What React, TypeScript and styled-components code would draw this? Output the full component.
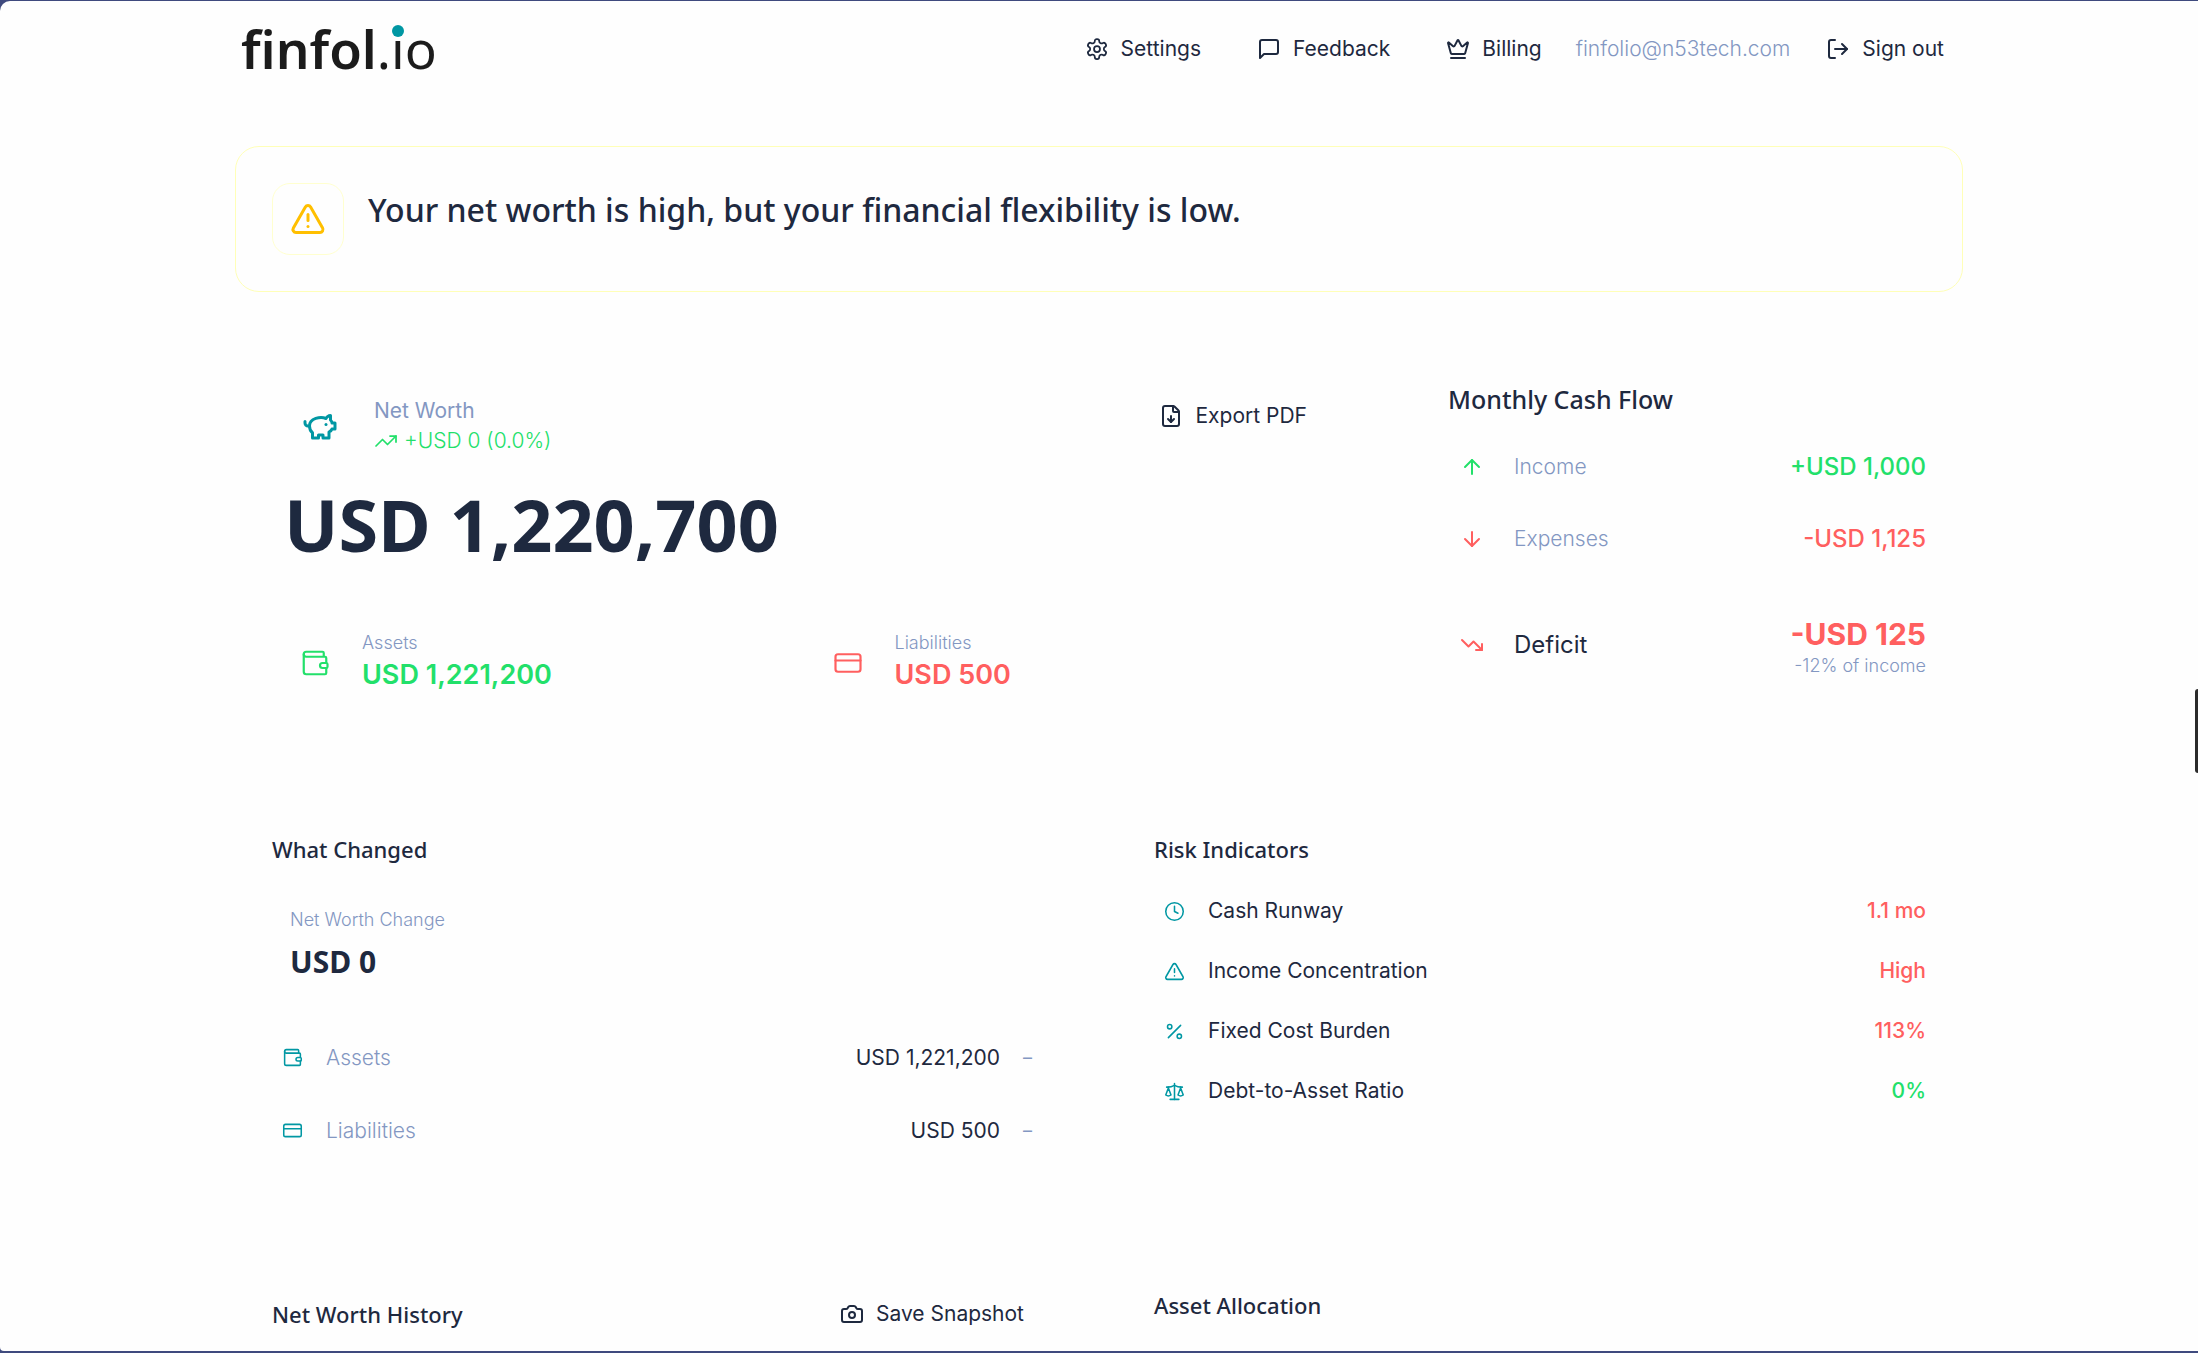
import React from "react";
import styled, { createGlobalStyle } from "styled-components";
import {
  Crown, LogOut, TriangleAlert, TrendingUp, TrendingDown,
  FileDown, Wallet, CreditCard, ArrowUp, ArrowDown, Clock, Percent, Scale, Camera,
} from "lucide-react";

const color = {
  ink: "#1e293f",
  muted: "#8397c2",
  teal: "#0097a3",
  green: "#22e06a",
  red: "#ff5f5f",
  amber: "#ffbf00",
  page: "#fefefe",
  frame: "#3f4a7e",
};

const display = `"Noto Sans", "Open Sans", sans-serif`;

const GlobalStyle = createGlobalStyle`
  * { box-sizing: border-box; }
  body { margin: 0; background: ${color.frame}; color: ${color.ink};
    font-family: Inter, "Liberation Sans", sans-serif; font-size: 21px; line-height: 30px; }
  h1, h2, p { margin: 0; padding: 0; font-weight: inherit; }
  svg { display: block; flex: none; }
`;

const Frame = styled.div`
  height: 100vh;
  padding: 1px 0 2px;
  overflow: hidden;
`;
const Page = styled.div`
  height: 100%;
  overflow: hidden;
  background: ${color.page};
  border-radius: 10px 0 0 4px;
`;
const Container = styled.div`
  max-width: 1728px;
  margin: 0 auto;
`;
const Header = styled.header`
  display: flex;
  align-items: center;
  justify-content: space-between;
  height: 96px;
  padding: 0 19px 0 6px;
`;
const Logo = styled.a`
  color: #1b1b1b;
  font: 600 53px/72px ${display};
  text-decoration: none;
  span { font-weight: 400; }
`;
const LogoI = styled.span`
  position: relative;
  &::after {
    content: "";
    position: absolute;
    left: 50%;
    top: 13px;
    width: 12px;
    height: 12px;
    margin-left: -6px;
    border-radius: 50%;
    background: ${color.teal};
  }
`;
const Nav = styled.nav`
  display: flex;
  align-items: center;
  gap: 56px;
`;
const Account = styled.div`
  display: flex;
  align-items: center;
  gap: 36px;
  margin-left: -22px;
`;
const Email = styled.span`
  color: ${color.muted};
  font-weight: 300;
`;
const Action = styled.button<{ $height?: number; $pad?: number }>`
  display: flex;
  align-items: center;
  gap: 12px;
  height: ${(p) => p.$height ?? 30}px;
  padding: 0 ${(p) => p.$pad ?? 0}px;
  border: 0;
  background: none;
  color: inherit;
  font: inherit;
  cursor: pointer;
`;
const Banner = styled.section`
  display: flex;
  gap: 24px;
  margin-top: 49px;
  padding: 36px;
  border: 1px solid #ffffb8;
  border-radius: 24px;
`;
const BannerIcon = styled.div`
  display: grid;
  place-items: center;
  width: 72px;
  height: 72px;
  border: 1px solid #ffffcf;
  border-radius: 18px;
  color: ${color.amber};
`;
const BannerTitle = styled.h1`
  font: 500 32px/54px ${display};
`;
const Overview = styled.div`
  display: grid;
  grid-template-columns: 2fr 1fr;
  gap: 72px;
  margin-top: 84px;
`;
const NetWorth = styled.section`
  padding: 16px 32px 0 37px;
`;
const Row = styled.div<{ $align?: string }>`
  display: flex;
  align-items: ${(p) => p.$align ?? "flex-start"};
  justify-content: space-between;
`;
const Summary = styled.div`
  display: flex;
  align-items: center;
  gap: 20px;
  padding-left: 14px;
`;
const Tile = styled.div<{ $size: number; $tone: string }>`
  display: grid;
  place-items: center;
  width: ${(p) => p.$size}px;
  height: ${(p) => p.$size}px;
  color: ${(p) => p.$tone};
`;
const Muted = styled.p<{ $small?: boolean; $light?: boolean }>`
  color: ${color.muted};
  font-size: ${(p) => (p.$small ? 18 : 21)}px;
  font-weight: ${(p) => (p.$light ? 300 : 400)};
`;
const Trend = styled.p`
  display: flex;
  align-items: center;
  gap: 6px;
  color: ${color.green};
  font-weight: 300;
`;
const Total = styled.p`
  margin-top: 16px;
  padding-left: 12px;
  font: 700 72px/96px ${display};
`;
const Split = styled.div`
  display: grid;
  grid-template-columns: 1fr 1fr;
  gap: 30px;
  margin-top: 56px;
`;
const SplitItem = styled.div`
  display: flex;
  align-items: flex-end;
  gap: 18px;
  padding-left: 14px;
`;
const Amount = styled.p<{ $tone: string; $size?: number; $weight?: number }>`
  color: ${(p) => p.$tone};
  font-size: ${(p) => p.$size ?? 21}px;
  font-weight: ${(p) => p.$weight ?? 500};
  line-height: ${(p) => ((p.$size ?? 21) > 24 ? 34 : 30)}px;
`;
const CashFlow = styled.section`
  padding: 5px 37px 0;
`;
const Title = styled.h2<{ $large?: boolean }>`
  font: 500 ${(p) => (p.$large ? 25 : 22)}px/36px ${display};
`;
const FlowRow = styled.div<{ $gap: number }>`
  display: flex;
  align-items: center;
  gap: 18px;
  min-height: 48px;
  margin-top: ${(p) => p.$gap}px;
`;
const Grow = styled.div`
  flex: 1;
`;
const Strong = styled.p`
  font-size: 24px;
  font-weight: 400;
`;
const End = styled.div`
  padding-top: 8px;
  text-align: right;
`;
const Columns = styled.div`
  display: grid;
  grid-template-columns: 1fr 1fr;
  gap: 36px;
`;
const Panel = styled.section<{ $top: number }>`
  padding: ${(p) => p.$top}px 37px 0;
`;
const Change = styled.div`
  padding: 38px 18px;
`;
const ChangeTotal = styled.p`
  margin-top: 6px;
  font: 700 30px/42px ${display};
`;
const Item = styled.div<{ $height: number; $pad: number }>`
  display: flex;
  align-items: center;
  gap: 23px;
  height: ${(p) => p.$height}px;
  padding: 0 ${(p) => p.$pad}px 0 10px;
`;
const RiskList = styled.div`
  padding-top: 14px;
`;
const Handle = styled.button`
  position: fixed;
  right: 0;
  top: 689px;
  width: 3px;
  height: 84px;
  padding: 0;
  border: 0;
  border-radius: 3px 0 0 3px;
  background: #2b2b2b;
`;

type GlyphProps = { size: number; stroke?: number; paths: string[] };
const Glyph = ({ size, stroke = 2, paths }: GlyphProps) => (
  <svg width={size} height={size} viewBox="0 0 24 24" fill="none" stroke="currentColor"
    strokeWidth={stroke} strokeLinecap="round" strokeLinejoin="round" aria-hidden="true">
    {paths.map((d) => <path key={d} d={d} />)}
  </svg>
);
const gear = [
  "M12.22 2h-.44a2 2 0 0 0-2 2v.18a2 2 0 0 1-1 1.73l-.43.25a2 2 0 0 1-2 0l-.15-.08a2 2 0 0 0-2.73.73l-.22.38a2 2 0 0 0 .73 2.73l.15.1a2 2 0 0 1 1 1.72v.51a2 2 0 0 1-1 1.74l-.15.09a2 2 0 0 0-.73 2.73l.22.38a2 2 0 0 0 2.73.73l.15-.08a2 2 0 0 1 2 0l.43.25a2 2 0 0 1 1 1.73V20a2 2 0 0 0 2 2h.44a2 2 0 0 0 2-2v-.18a2 2 0 0 1 1-1.73l.43-.25a2 2 0 0 1 2 0l.15.08a2 2 0 0 0 2.73-.73l.22-.39a2 2 0 0 0-.73-2.73l-.15-.08a2 2 0 0 1-1-1.74v-.5a2 2 0 0 1 1-1.74l.15-.09a2 2 0 0 0 .73-2.73l-.22-.38a2 2 0 0 0-2.73-.73l-.15.08a2 2 0 0 1-2 0l-.43-.25a2 2 0 0 1-1-1.73V4a2 2 0 0 0-2-2z",
  "M12 9a3 3 0 1 0 0 6 3 3 0 0 0 0-6z",
];
const speech = ["M21 15a2 2 0 0 1-2 2H7l-4 4V5a2 2 0 0 1 2-2h14a2 2 0 0 1 2 2z"];
const piggy = [
  "M19 5c-1.5 0-2.8 1.4-3 2-3.5-1.5-11-.3-11 5 0 1.8 0 3 2 4.5V20h4v-2h3v2h4v-4c1-.5 1.7-1 2-2h2v-4h-2c0-1-.5-1.5-1-2V5z",
  "M2 9v1c0 1.1.9 2 2 2h1",
  "M16 11h.01",
];

const changes = [
  { icon: Wallet, label: "Assets", value: "USD 1,221,200" },
  { icon: CreditCard, label: "Liabilities", value: "USD 500" },
];
const risks = [
  { icon: Clock, label: "Cash Runway", value: "1.1 mo", tone: color.red },
  { icon: TriangleAlert, label: "Income Concentration", value: "High", tone: color.red },
  { icon: Percent, label: "Fixed Cost Burden", value: "113%", tone: color.red },
  { icon: Scale, label: "Debt-to-Asset Ratio", value: "0%", tone: color.green },
];

export default function App() {
  return (
    <Frame>
      <GlobalStyle />
      <Page>
        <Container>
          <Header>
            <Logo href="#" aria-label="finfol.io">
              finfol<span>.<LogoI>i</LogoI>o</span>
            </Logo>
            <Nav>
              <Action><Glyph size={24} stroke={1.75} paths={gear} />Settings</Action>
              <Action><Glyph size={24} paths={speech} />Feedback</Action>
              <Action><Crown size={24} />Billing</Action>
              <Account>
                <Email>finfolio@n53tech.com</Email>
                <Action><LogOut size={24} />Sign out</Action>
              </Account>
            </Nav>
          </Header>

          <Banner>
            <BannerIcon><TriangleAlert size={36} strokeWidth={2} /></BannerIcon>
            <BannerTitle>Your net worth is high, but your financial flexibility is low.</BannerTitle>
          </Banner>

          <Overview>
            <NetWorth>
              <Row>
                <Summary>
                  <Tile $size={68} $tone={color.teal}><Glyph size={36} paths={piggy} /></Tile>
                  <div>
                    <Muted>Net Worth</Muted>
                    <Trend><TrendingUp size={24} strokeWidth={1.75} />+USD 0 (0.0%)</Trend>
                  </div>
                </Summary>
                <Action $height={48}><FileDown size={24} />Export PDF</Action>
              </Row>
              <Total>USD 1,220,700</Total>
              <Split>
                <SplitItem>
                  <Tile $size={58} $tone={color.green}><Wallet size={30} strokeWidth={1.75} /></Tile>
                  <div>
                    <Muted $small $light>Assets</Muted>
                    <Amount $tone={color.green} $size={27} $weight={600}>USD 1,221,200</Amount>
                  </div>
                </SplitItem>
                <SplitItem>
                  <Tile $size={58} $tone={color.red}><CreditCard size={30} strokeWidth={1.75} /></Tile>
                  <div>
                    <Muted $small $light>Liabilities</Muted>
                    <Amount $tone={color.red} $size={27} $weight={600}>USD 500</Amount>
                  </div>
                </SplitItem>
              </Split>
            </NetWorth>

            <CashFlow>
              <Title $large>Monthly Cash Flow</Title>
              <FlowRow $gap={26}>
                <Tile $size={48} $tone={color.green}><ArrowUp size={24} strokeWidth={2} /></Tile>
                <Grow><Muted $light>Income</Muted></Grow>
                <Amount $tone={color.green} $size={24}>+USD 1,000</Amount>
              </FlowRow>
              <FlowRow $gap={24}>
                <Tile $size={48} $tone={color.red}><ArrowDown size={24} strokeWidth={2} /></Tile>
                <Grow><Muted $light>Expenses</Muted></Grow>
                <Amount $tone={color.red} $size={24}>-USD 1,125</Amount>
              </FlowRow>
              <FlowRow $gap={46}>
                <Tile $size={48} $tone={color.red}><TrendingDown size={24} strokeWidth={2} /></Tile>
                <Grow><Strong>Deficit</Strong></Grow>
                <End>
                  <Amount $tone={color.red} $size={30} $weight={700}>-USD 125</Amount>
                  <Muted $small $light>-12% of income</Muted>
                </End>
              </FlowRow>
            </CashFlow>
          </Overview>

          <Columns>
            <Panel $top={139}>
              <Title>What Changed</Title>
              <Change>
                <Muted $small $light>Net Worth Change</Muted>
                <ChangeTotal>USD 0</ChangeTotal>
              </Change>
              {changes.map(({ icon: Icon, label, value }) => (
                <Item key={label} $height={73} $pad={12}>
                  <Icon size={21} strokeWidth={1.75} color={color.teal} />
                  <Grow><Muted $light>{label}</Muted></Grow>
                  <p>{value}</p>
                  <Muted $small>–</Muted>
                </Item>
              ))}
            </Panel>
            <Panel $top={139}>
              <Title>Risk Indicators</Title>
              <RiskList>
                {risks.map(({ icon: Icon, label, value, tone }) => (
                  <Item key={label} $height={60} $pad={0}>
                    <Icon size={21} strokeWidth={1.75} color={color.teal} />
                    <Grow>{label}</Grow>
                    <Amount $tone={tone}>{value}</Amount>
                  </Item>
                ))}
              </RiskList>
            </Panel>
          </Columns>

          <Columns>
            <Panel $top={129}>
              <Row $align="center">
                <Title>Net Worth History</Title>
                <Action $pad={20}><Camera size={24} />Save Snapshot</Action>
              </Row>
            </Panel>
            <Panel $top={120}>
              <Title>Asset Allocation</Title>
            </Panel>
          </Columns>
        </Container>
      </Page>
      <Handle aria-label="Open side panel" />
    </Frame>
  );
}
